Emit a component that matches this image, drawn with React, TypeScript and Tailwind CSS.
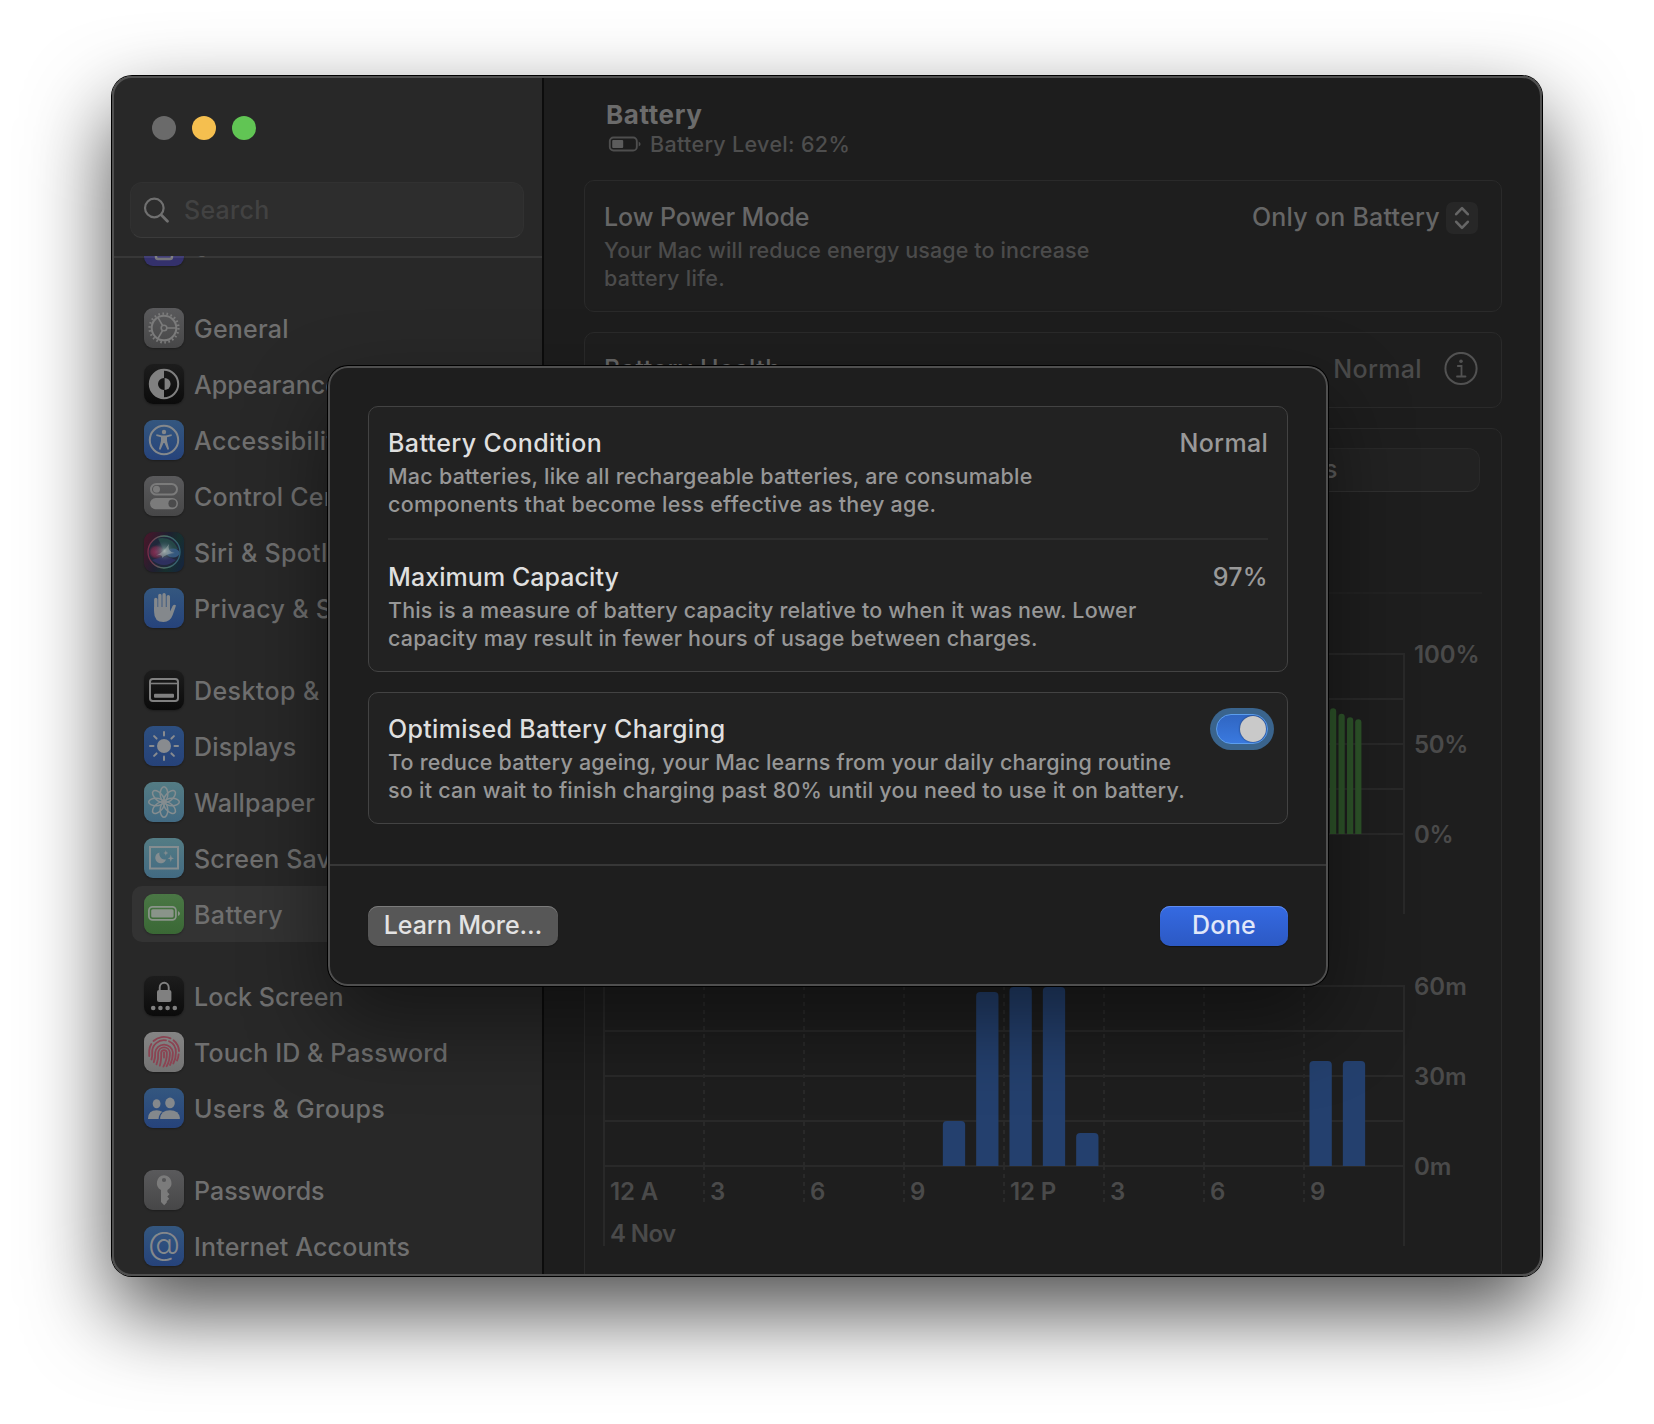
import React from "react";

const spokes = [0, 45, 90, 135, 180, 225, 270, 315];

function Glyph({ children }: { children: React.ReactNode }) {
  return (
    <svg viewBox="0 0 40 40" className="block h-10 w-10" fill="none" stroke="currentColor">
      {children}
    </svg>
  );
}

const HourglassIcon = (
  <Glyph>
    <rect x="12" y="7" width="16" height="26" rx="2" strokeWidth="2.4" />
  </Glyph>
);

const GearIcon = (
  <Glyph>
    <circle cx="20" cy="20" r="12.3" strokeWidth="2" />
    <circle cx="20" cy="20" r="14.4" strokeWidth="2.4" strokeDasharray="1.6 2.513" />
    <circle cx="20" cy="20" r="2.8" strokeWidth="1.6" />
    <path d="M23 20H32M18.5 17.4L14 9.6M18.5 22.6L14 30.4" strokeWidth="1.7" />
  </Glyph>
);

const AppearanceIcon = (
  <Glyph>
    <circle cx="20" cy="20" r="14.2" strokeWidth="2" />
    <path d="M20 5.5A14.5 14.5 0 0 0 20 34.5V26A6 6 0 0 1 20 14Z" fill="currentColor" stroke="none" />
    <path d="M20.6 14A6 6 0 0 1 20.6 26Z" fill="currentColor" stroke="none" />
  </Glyph>
);

const AccessibilityIcon = (
  <Glyph>
    <circle cx="20" cy="20" r="14.2" strokeWidth="2" />
    <circle cx="20" cy="12" r="2.2" fill="currentColor" stroke="none" />
    <path
      d="M12.6 14.3L18 15.6H22L27.4 14.3Q28.5 15.3 27.4 16L23 17.3V21L25 28.8Q24.600 30.2 23.4 29.5L20.5 23H19.5L16.6 29.5Q15.4 30.2 15 28.8L17 21V17.3L12.6 16Q11.5 15.3 12.6 14.3Z"
      fill="currentColor"
      stroke="none"
    />
  </Glyph>
);

const ControlCenterIcon = (
  <Glyph>
    <rect x="7" y="8" width="26" height="10.6" rx="5.3" strokeWidth="2" />
    <circle cx="12.5" cy="13.3" r="3.5" fill="currentColor" stroke="none" />
    <rect x="6" y="22" width="28" height="11.2" rx="5.6" fill="currentColor" stroke="none" />
    <circle cx="28.4" cy="27.6" r="4" fill="#4b4b4c" stroke="none" />
  </Glyph>
);

const SiriIcon = (
  <svg viewBox="0 0 40 40" className="block h-10 w-10" fill="none">
    <defs>
      <radialGradient id="siriCore" cx="0.5" cy="0.5" r="0.5">
        <stop offset="0" stopColor="#a3adac" />
        <stop offset="0.3" stopColor="#71878c" stopOpacity="0.7" />
        <stop offset="1" stopColor="#3a4a66" stopOpacity="0" />
      </radialGradient>
      <radialGradient id="siriPink" cx="0.5" cy="0.5" r="0.5">
        <stop offset="0" stopColor="#8a3258" />
        <stop offset="0.7" stopColor="#752a4a" stopOpacity="0.8" />
        <stop offset="1" stopColor="#5a2340" stopOpacity="0.2" />
      </radialGradient>
      <linearGradient id="siriBase" x1="0" y1="0.3" x2="1" y2="0.7">
        <stop offset="0" stopColor="#43182a" />
        <stop offset="0.45" stopColor="#1e2030" />
        <stop offset="0.7" stopColor="#17302e" />
        <stop offset="1" stopColor="#16263c" />
      </linearGradient>
      <linearGradient id="siriRing" x1="0" y1="0" x2="1" y2="0">
        <stop offset="0" stopColor="#7a2b48" />
        <stop offset="0.5" stopColor="#4d7064" />
        <stop offset="1" stopColor="#2f5f74" />
      </linearGradient>
    </defs>
    <rect width="40" height="40" rx="9" fill="url(#siriBase)" />
    <circle cx="20" cy="20" r="16" fill="#20283a" stroke="url(#siriRing)" strokeWidth="1.3" />
    <path d="M14 6.500Q28 4 34 17Q27 17 20 19Z" fill="#2a5c50" fillOpacity="0.6" />
    <path d="M8 28Q20 38 32 28Q22 22 8 28Z" fill="#35336e" fillOpacity="0.7" />
    <ellipse cx="12.5" cy="20" rx="7.8" ry="7" fill="url(#siriPink)" />
    <ellipse cx="29" cy="21" rx="6.500" ry="4.500" fill="#3a6490" fillOpacity="0.8" />
    <circle cx="20.5" cy="19" r="10.500" fill="url(#siriCore)" />
    <path d="M12 23.500Q19 21 25 12Q22.500 19.500 31 21Q22.500 21.500 18 26Q19 22 12 23.500Z" fill="#a9b4b3" fillOpacity="0.5" />
  </svg>
);

const HandIcon = (
  <Glyph>
    <path d="M11.8 11.5V22M15.9 7.5V20M20.1 6.7V20M24.3 8.6V20" strokeWidth="3.4" strokeLinecap="round" />
    <path
      d="M10.1 19H26V23.5L28.6 18Q30.1 15.8 31.9 17.2Q32 17.6 31.5 18.9L28.7 27Q26.2 34 19.5 34Q10.1 34 10.1 24Z"
      fill="currentColor"
      stroke="none"
    />
  </Glyph>
);

const DesktopIcon = (
  <Glyph>
    <rect x="6" y="9" width="28" height="22" rx="2.8" strokeWidth="2" />
    <path d="M6 13.5H34" strokeWidth="1.6" />
    <rect x="10" y="23.8" width="20" height="4" rx="1" fill="currentColor" stroke="none" />
  </Glyph>
);

const SunIcon = (
  <Glyph>
    <circle cx="20" cy="20" r="7" fill="currentColor" stroke="none" />
    {spokes.map((a) => (
      <path key={a} d="M20 9.5V6" strokeWidth="2" strokeLinecap="round" transform={`rotate(${a} 20 20)`} />
    ))}
  </Glyph>
);

const FlowerIcon = (
  <Glyph>
    {spokes.map((a) => (
      <ellipse key={a} cx="20" cy="12" rx="3.8" ry="7.3" strokeWidth="1.5" transform={`rotate(${a} 20 20)`} />
    ))}
  </Glyph>
);

const ScreenSaverIcon = (
  <Glyph>
    <rect x="6" y="9" width="28" height="21.5" strokeWidth="2" />
    <path d="M15.5 14.5A5.5 5.5 0 1 0 22 21.5A5.7 5.7 0 0 1 15.5 14.5Z" fill="currentColor" stroke="none" />
    <path d="M21.8 12.3L22.5 14.3L24.3 15L22.5 15.7L21.8 17.7L21.1 15.7L19.3 15L21.1 14.3Z" fill="currentColor" stroke="none" />
    <path d="M26.8 16.5L27.6 19.4L30 20.3L27.6 21.2L26.8 24L26 21.2L23.6 20.3L26 19.4Z" fill="currentColor" stroke="none" />
  </Glyph>
);

const BatteryIcon = (
  <Glyph>
    <rect x="4.9" y="12.9" width="27" height="13" rx="3.6" strokeWidth="1.7" />
    <rect x="7.2" y="15.2" width="22.4" height="8.4" rx="1.6" fill="currentColor" stroke="none" />
    <path d="M34 17Q36 18 36 19.5T34 22Z" fill="currentColor" stroke="none" />
  </Glyph>
);

const LockIcon = (
  <Glyph>
    <rect x="13" y="14" width="14.4" height="12" rx="2" fill="currentColor" stroke="none" />
    <path d="M15.7 14.5V11.5A4.5 4.8 0 0 1 24.7 11.5V14.5" strokeWidth="1.9" />
    {[9.2, 16.4, 23.6, 30.8].map((x) => (
      <circle key={x} cx={x} cy="32" r="2.3" fill="currentColor" stroke="none" />
    ))}
  </Glyph>
);

const FingerprintIcon = (
  <Glyph>
    <g strokeWidth="1.8" strokeLinecap="round">
      <path d="M9.5 9A15 15 0 0 1 26.5 6.4M29.5 8.2A15 15 0 0 1 35 19" />
      <path d="M5.2 24V18.5A15 15 0 0 1 7.3 12M34.6 22.5Q34.3 26 33 28.5" />
      <path d="M7.5 27.5Q8.5 24.5 8.2 20.5A11.9 11.9 0 0 1 22 8.3M25 9.2A11.9 11.9 0 0 1 31.9 20.5Q31.9 27 29.3 31.5" />
      <path d="M9.8 30.2Q11.5 26 11.2 20.5A8.9 8.9 0 0 1 28.9 20.5Q28.9 27.5 26 33" />
      <path d="M12.5 32.3Q14.6 27 14.2 20.5A5.9 5.9 0 0 1 25.9 20.5Q26 28.5 22.6 34.3" />
      <path d="M15.8 33.7Q17.5 28.5 17.2 20.5A2.9 2.9 0 0 1 22.9 20.5Q23 28.5 19.4 34.6" />
      <path d="M20 20.5V25.5" />
    </g>
  </Glyph>
);

const UsersIcon = (
  <Glyph>
    <ellipse cx="12.6" cy="15.7" rx="3.9" ry="4.5" fill="currentColor" stroke="none" />
    <ellipse cx="26" cy="14.9" rx="4.8" ry="5.3" fill="currentColor" stroke="none" />
    <path d="M4 30.5Q4.2 22.3 12.7 22.2Q16 22.2 18.2 23.8Q14.8 26.5 14.6 31H4.6Q4 31 4 30.5Z" fill="currentColor" stroke="none" />
    <path d="M16 30.2Q17 22.2 26 22.2T36 30.2Q36 31 35.3 31H16.7Q16 31 16 30.2Z" fill="currentColor" stroke="none" />
  </Glyph>
);

const KeyIcon = (
  <Glyph>
    <path
      fillRule="evenodd"
      d="M20 5.2A7.9 7.9 0 0 1 23.4 20V22L25.5 24.2L23.3 26.4L25.2 28.8L22.8 31.2V32.5L20.2 35.2L17 32V20A7.9 7.9 0 0 1 20 5.2ZM20 7.9A2.1 2.1 0 1 0 20 12.1A2.1 2.1 0 1 0 20 7.9Z"
      fill="currentColor"
      stroke="none"
    />
  </Glyph>
);

const GRAY = "bg-linear-to-b from-[#5a5a5c] to-[#474748] text-[#7b7b7b]";
const BLACK = "bg-linear-to-b from-[#1d1d1d] to-[#0b0b0b] text-[#808080]";
const BLUE = "bg-linear-to-b from-[#34577f] to-[#26437b] text-[#84888c]";
const CYAN = "bg-linear-to-b from-[#547c84] to-[#426a82] text-[#858d90]";

type Item = {
  label: string;
  tile: string;
  icon: React.ReactNode;
  track: string;
  selected?: boolean;
};

const sections: Item[][] = [
  [{ label: "Screen Time", tile: "bg-[#34316c] text-[#76767a]", icon: HourglassIcon, track: "tracking-[0.2px]" }],
  [
    { label: "General", tile: GRAY, icon: GearIcon, track: "tracking-[0.22px]" },
    { label: "Appearance", tile: BLACK, icon: AppearanceIcon, track: "tracking-[0.02px]" },
    { label: "Accessibility", tile: BLUE, icon: AccessibilityIcon, track: "tracking-[0.35px]" },
    { label: "Control Centre", tile: GRAY, icon: ControlCenterIcon, track: "tracking-[0.25px]" },
    { label: "Siri & Spotlight", tile: "bg-[#1c1f2b]", icon: SiriIcon, track: "tracking-[0.3px]" },
    { label: "Privacy & Security", tile: BLUE, icon: HandIcon, track: "tracking-[0.3px]" },
  ],
  [
    { label: "Desktop & Dock", tile: BLACK, icon: DesktopIcon, track: "tracking-[0.42px]" },
    { label: "Displays", tile: "bg-linear-to-b from-[#2d4f80] to-[#264279] text-[#888b8f]", icon: SunIcon, track: "tracking-[0.15px]" },
    { label: "Wallpaper", tile: CYAN, icon: FlowerIcon, track: "tracking-[0.1px]" },
    { label: "Screen Saver", tile: CYAN, icon: ScreenSaverIcon, track: "tracking-[0.2px]" },
    {
      label: "Battery",
      tile: "bg-linear-to-b from-[#4a7745] to-[#3a6835] text-[#8a948a]",
      icon: BatteryIcon,
      track: "tracking-[0.45px]",
      selected: true,
    },
  ],
  [
    { label: "Lock Screen", tile: BLACK, icon: LockIcon, track: "tracking-[0.1px]" },
    { label: "Touch ID & Password", tile: "bg-linear-to-b from-[#858585] to-[#737373] text-[#8b4352]", icon: FingerprintIcon, track: "tracking-[0.1px]" },
    { label: "Users & Groups", tile: BLUE, icon: UsersIcon, track: "tracking-[0.33px]" },
  ],
  [
    { label: "Passwords", tile: GRAY, icon: KeyIcon, track: "tracking-[0px]" },
    {
      label: "Internet Accounts",
      tile: BLUE,
      icon: <span className="-mt-[6px] text-[33px] font-light leading-[36px]">@</span>,
      track: "tracking-[0.18px]",
    },
  ],
];

function Sidebar() {
  return (
    <aside className="flex h-full w-[432px] shrink-0 flex-col border-r-2 border-[#0c0c0c] bg-[#282828]">
      <div className="flex h-[180px] shrink-0 flex-col pt-10">
        <div className="flex gap-4 pl-10">
          <span className="h-6 w-6 rounded-full bg-[#6a6a6a]" />
          <span className="h-6 w-6 rounded-full bg-[#f5bf4f]" />
          <span className="h-6 w-6 rounded-full bg-[#61c554]" />
        </div>
        <div className="mx-[18px] mt-[42px] flex h-14 items-center rounded-[12px] border border-[#313131] border-b-[#3b3b3b] bg-[#2d2d2d] pl-3">
          <svg viewBox="0 0 30 30" className="h-[30px] w-[30px] text-[#707070]" fill="none" stroke="currentColor" strokeLinecap="round">
            <circle cx="11.3" cy="13" r="9.3" strokeWidth="2.2" />
            <path d="M18.3 20L24.5 26.2" strokeWidth="2.8" />
          </svg>
          <span className="ml-[11px] text-[25px] leading-[30px] tracking-[0.25px] text-[#424242]">Search</span>
        </div>
      </div>
      <div className="relative flex-1 overflow-hidden">
        <div className="-mt-[38px] flex flex-col gap-[26px] px-5">
          {sections.map((items, i) => (
            <div key={i}>
              {items.map((it) => (
                <div
                  key={it.label}
                  className={"flex h-14 items-center rounded-[10px] pl-3 " + (it.selected ? "bg-[#333333]" : "")}
                >
                  <div className={"flex h-10 w-10 shrink-0 items-center justify-center rounded-[9px] shadow-[0_1px_2px_rgba(0,0,0,0.3)] " + it.tile}>
                    {it.icon}
                  </div>
                  <span className={"ml-[10px] whitespace-nowrap pt-[2px] text-[25px] leading-[30px] text-[#6f6f6f] " + it.track}>
                    {it.label}
                  </span>
                </div>
              ))}
            </div>
          ))}
        </div>
        <div className="absolute inset-x-0 top-0 h-[2px] bg-white/7" />
      </div>
    </aside>
  );
}

function LevelChart() {
  const bars = [
    [1330, 708.3],
    [1338.5, 713.7],
    [1347, 717.3],
    [1355.2, 719.2],
  ];
  return (
    <svg viewBox="585 594 916 346" className="block h-[346px] w-[916px]">
      <g stroke="#292929" strokeWidth="2">
        {[654, 699, 744, 789, 834].map((y) => (
          <path key={y} d={`M604 ${y}H1404`} />
        ))}
        <path d="M1404 653V914" />
      </g>
      <g fill="#2e552a">
        {bars.map(([x, y]) => (
          <path key={x} d={`M${x} 834V${y + 3}a3.1 3 0 0 1 6.2 0V834Z`} />
        ))}
      </g>
      <g fill="#4a4a4a" fontSize="24" fontWeight="600">
        <text x="1414" y="663" letterSpacing="-0.1">100%</text>
        <text x="1414" y="753" letterSpacing="-0.4">50%</text>
        <text x="1414" y="843" letterSpacing="-0.4">0%</text>
      </g>
    </svg>
  );
}

function UsageChart() {
  const bars = [
    [10, 1121],
    [11, 992],
    [12, 987],
    [13, 987],
    [14, 1133],
    [21, 1061],
    [22, 1061],
  ];
  const hours = ["12 A", "3", "6", "9", "12 P", "3", "6", "9"];
  return (
    <svg viewBox="585 940 916 330" className="block h-[330px] w-[916px]">
      <g stroke="#292929" strokeWidth="2">
        {[986, 1031, 1076, 1121, 1166].map((y) => (
          <path key={y} d={`M604 ${y}H1404`} />
        ))}
        <path d="M604 985V1246M1404 985V1246" />
        {[1, 2, 3, 4, 5, 6, 7].map((k) => (
          <path key={k} d={`M${604 + 100 * k} 986V1166M${604 + 100 * k} 1166V1202`} strokeDasharray="4 4" />
        ))}
      </g>
      <g fill="#24406e">
        {bars.map(([h, y]) => {
          const x = 604 + (h * 100) / 3 + 5.5;
          return <path key={h} d={`M${x} 1166V${y + 4}a4 4 0 0 1 4 -4h14.3a4 4 0 0 1 4 4V1166Z`} />;
        })}
      </g>
      <g fill="#4a4a4a" fontSize="24" fontWeight="600">
        {hours.map((t, k) => (
          <text key={k} x={610 + 100 * k} y="1200" letterSpacing="-0.1">
            {t}
          </text>
        ))}
        <text x="610" y="1242" letterSpacing="-0.6">4 Nov</text>
        <text x="1414" y="995" letterSpacing="0">60m</text>
        <text x="1414" y="1085" letterSpacing="0">30m</text>
        <text x="1414" y="1175" letterSpacing="0">0m</text>
      </g>
    </svg>
  );
}

function Content() {
  const card = "rounded-[10px] border border-[#2a2a2a] bg-[#1e1e1e]";
  return (
    <main className="flex h-full flex-1 flex-col overflow-hidden bg-[#1d1d1d] text-[#666666]">
      <header className="h-[104px] shrink-0 pl-[62px] pt-6">
        <h1 className="text-[26px] font-bold leading-[30px] tracking-[0.6px] text-[#6b6b6b]">Battery</h1>
        <div className="flex items-center text-[#4e4e4e]">
          <svg viewBox="0 0 34 16" className="ml-[2px] h-4 w-[34px]" fill="none" stroke="currentColor">
            <rect x="1.8" y="1.5" width="27" height="13" rx="3.6" strokeWidth="1.9" />
            <rect x="4.2" y="3.9" width="11" height="8.2" rx="1" fill="#5c5c5c" stroke="none" />
            <path d="M30.7 5.5Q32.6 6.5 32.6 8T30.7 10.5Z" fill="currentColor" stroke="none" />
          </svg>
          <span className="ml-2 text-[21.5px] leading-7 tracking-[0.32px]">Battery Level: 62%</span>
        </div>
      </header>
      <div className="flex flex-col gap-5 px-10">
        <section className={"flex h-[132px] justify-between pl-[19px] pr-[23px] pt-[21px] " + card}>
          <div>
            <div className="text-[25px] leading-[30px] tracking-[-0.05px]">Low Power Mode</div>
            <p className="mt-1 text-[21.5px] leading-7 text-[#4b4b4b]">
              <span className="tracking-[0.12px]">Your Mac will reduce energy usage to increase</span>
              <br />
              <span className="tracking-[0.35px]">battery life.</span>
            </p>
          </div>
          <div className="flex h-8 items-start">
            <span className="text-[25px] leading-[30px] tracking-[0.25px]">Only on Battery</span>
            <div className="ml-[6px] flex h-8 w-8 items-center justify-center rounded-[7px] bg-[#272727]">
              <svg viewBox="0 0 16 24" className="h-6 w-4" fill="none" stroke="currentColor" strokeWidth="2.6" strokeLinecap="round" strokeLinejoin="round">
                <path d="M2.2 8.2L8 2.2L13.8 8.2M2.2 15.8L8 21.8L13.8 15.8" />
              </svg>
            </div>
          </div>
        </section>
        <section className={"flex h-[76px] justify-between pl-[19px] pr-[23px] pt-[21px] " + card}>
          <span className="text-[25px] leading-[30px] tracking-[0.44px]">Battery Health</span>
          <div className="flex items-start text-[#4b4b4b]">
            <span className="text-[25px] leading-[30px] tracking-[0.35px]">Normal</span>
            <svg viewBox="0 0 34 34" className="-mt-[2px] ml-[22px] h-[34px] w-[34px] text-[#525252]" fill="none" stroke="currentColor">
              <circle cx="17" cy="16.5" r="15.6" strokeWidth="2" />
              <circle cx="17" cy="9.3" r="1.8" fill="currentColor" stroke="none" />
              <path d="M13.8 14H17.500V24.5M13 24.5H21.5" strokeWidth="1.8" strokeLinecap="round" />
            </svg>
          </div>
        </section>
        <section className={"h-[900px] " + card}>
          <div className="ml-[19px] mt-[19px] flex h-11 w-[876px] rounded-[12px] border border-[#292929] border-b-[#303030] bg-[#222222] pb-px text-[25px] tracking-[0.4px] text-[#5c5c5c]">
            <span className="flex flex-1 items-center justify-center">Last 24 Hours</span>
            <span className="flex flex-1 items-center justify-center">Last 10 Days</span>
          </div>
          <div className="mx-[19px] mt-[100px] h-[2px] bg-[#222222]" />
          <LevelChart />
          <UsageChart />
        </section>
      </div>
    </main>
  );
}

type Line = { text: string; track: string };

function Setting({ title, lines, children }: { title: Line; lines: Line[]; children: React.ReactNode }) {
  return (
    <div className="flex justify-between">
      <div>
        <div className={"text-[25px] leading-[30px] text-[#dfdfdf] " + title.track}>{title.text}</div>
        <p className="mt-1 text-[21.5px] leading-7 text-[#979797]">
          {lines.map((l) => (
            <span key={l.text} className={"block whitespace-nowrap " + l.track}>
              {l.text}
            </span>
          ))}
        </p>
      </div>
      {children}
    </div>
  );
}

function Dialog() {
  const card = "rounded-[10px] border border-[#434343] bg-[#222222] pl-[19px] pt-[21px] pb-[19px]";
  return (
    <div
      role="dialog"
      className="absolute left-[216px] top-[290px] flex h-[620px] w-[1000px] flex-col overflow-hidden rounded-[20px] bg-[#1e1e1e] shadow-[0_0_0_1px_#000,0_36px_84px_rgba(0,0,0,0.45)]"
    >
      <div className="flex h-[498px] flex-col gap-5 px-10 pt-10">
        <div className={card + " pr-[19px]"}>
          <Setting
            title={{ text: "Battery Condition", track: "tracking-[0.38px]" }}
            lines={[
              { text: "Mac batteries, like all rechargeable batteries, are consumable", track: "tracking-[0.24px]" },
              { text: "components that become less effective as they age.", track: "tracking-[0.26px]" },
            ]}
          >
            <span className="text-[25px] leading-[30px] tracking-[0.3px] text-[#999999]">Normal</span>
          </Setting>
          <div className="mb-[22px] mt-5 h-[2px] bg-[#2d2d2d]" />
          <Setting
            title={{ text: "Maximum Capacity", track: "tracking-[0.07px]" }}
            lines={[
              { text: "This is a measure of battery capacity relative to when it was new. Lower", track: "tracking-[0.16px]" },
              { text: "capacity may result in fewer hours of usage between charges.", track: "tracking-[0.17px]" },
            ]}
          >
            <span className="text-[25px] leading-[30px] tracking-[0.3px] text-[#999999]">97%</span>
          </Setting>
        </div>
        <div className={card + " pr-[13px]"}>
          <Setting
            title={{ text: "Optimised Battery Charging", track: "tracking-[0.3px]" }}
            lines={[
              { text: "To reduce battery ageing, your Mac learns from your daily charging routine", track: "tracking-[0.19px]" },
              { text: "so it can wait to finish charging past 80% until you need to use it on battery.", track: "tracking-[0.24px]" },
            ]}
          >
            <div className="-ml-8 -mt-[6px] flex h-[42px] w-16 shrink-0 items-center justify-center rounded-full bg-[#3a648d]">
              <div className="flex h-[30px] w-[52px] items-center justify-end rounded-full border border-[#5c9eee] bg-linear-to-b from-[#3066c2] to-[#3a79df] pr-px">
                <span className="h-[26px] w-[26px] rounded-full bg-[#c9c9c9] shadow-[0_0_2px_rgba(0,0,0,0.6)]" />
              </div>
            </div>
          </Setting>
        </div>
      </div>
      <div className="h-[2px] bg-[#373737]" />
      <div className="flex items-start justify-between px-10 pt-10">
        <button className="flex h-10 w-[190px] justify-center rounded-[10px] bg-[#575757] pt-1 text-[25px] leading-[30px] tracking-[-0.1px] text-[#e3e3e3] shadow-[inset_0_1px_0_#7b7b7b,0_1px_1px_rgba(0,0,0,0.4)]">
          Learn More…
        </button>
        <button className="flex h-10 w-32 justify-center rounded-[10px] bg-linear-to-b from-[#356ae2] to-[#2c59c4] pt-1 text-[25px] leading-[30px] tracking-[0.3px] text-[#e0e7f9] shadow-[inset_0_1px_0_#5f8cf0,0_1px_1px_rgba(0,0,0,0.4)]">
          Done
        </button>
      </div>
      <div className="pointer-events-none absolute inset-0 rounded-[20px] border-2 border-[#4f4f4f]" />
    </div>
  );
}

export default function App() {
  return (
    <div className="h-[1424px] w-[1654px] overflow-hidden bg-white pl-[112px] pt-[76px] font-['Inter',sans-serif] font-[450]">
      <div className="relative h-[1200px] w-[1430px] rounded-[20px] shadow-[0_0_0_1px_#000,0_36px_84px_rgba(0,0,0,0.7)]">
        <div className="relative flex h-full w-full overflow-hidden rounded-[20px]">
          <Sidebar />
          <Content />
          <Dialog />
        </div>
        <div className="pointer-events-none absolute inset-0 rounded-[20px] border-2 border-[#505050]" />
      </div>
    </div>
  );
}
